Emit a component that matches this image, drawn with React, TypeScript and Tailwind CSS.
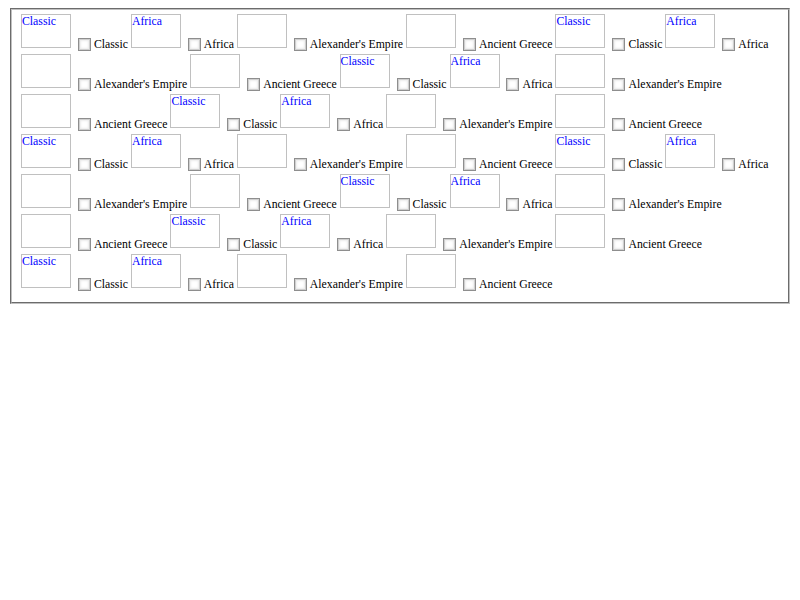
const cycle = [
  { alt: "Classic", label: "Classic" },
  { alt: "Africa", label: "Africa" },
  { alt: "", label: "Alexander's Empire" },
  { alt: "", label: "Ancient Greece" },
];

// 9 rounds of the same four map entries
const items = Array.from({ length: 36 }, (_, i) => cycle[i % 4]);

function MapThumb({ alt }: { alt: string }) {
  return (
    <span className="inline-block w-[50px] h-[34px] border border-[#c0c0c0] overflow-hidden align-baseline">
      {alt && <span className="block text-[#0000ff] leading-[normal]">{alt}</span>}
    </span>
  );
}

function CheckBox() {
  return (
    <span className="inline-block w-[13px] h-[13px] ml-[4px] mr-[3px] my-[3px] align-[-6px] border border-[#8e8e8e] bg-white shadow-[inset_0_0_0_1px_#cfcfcf,inset_0_0_2px_2px_#ececec]" />
  );
}

export default function App() {
  return (
    <div className="pt-[8px] px-[8px] font-['Liberation_Serif','Times_New_Roman',serif] text-[11.78px] text-black bg-white">
      <div className="mx-[2px] border-2 [border-style:groove] border-[#c0c0c0] pt-[4.2px] px-[9px] pb-[7.5px] leading-[normal]">
        {items.map((item, i) => (
          <span key={i}>
            <span className="whitespace-nowrap">
              <MapThumb alt={item.alt} />{" "}
              <CheckBox />
              {item.label}
            </span>{" "}
          </span>
        ))}
      </div>
    </div>
  );
}
